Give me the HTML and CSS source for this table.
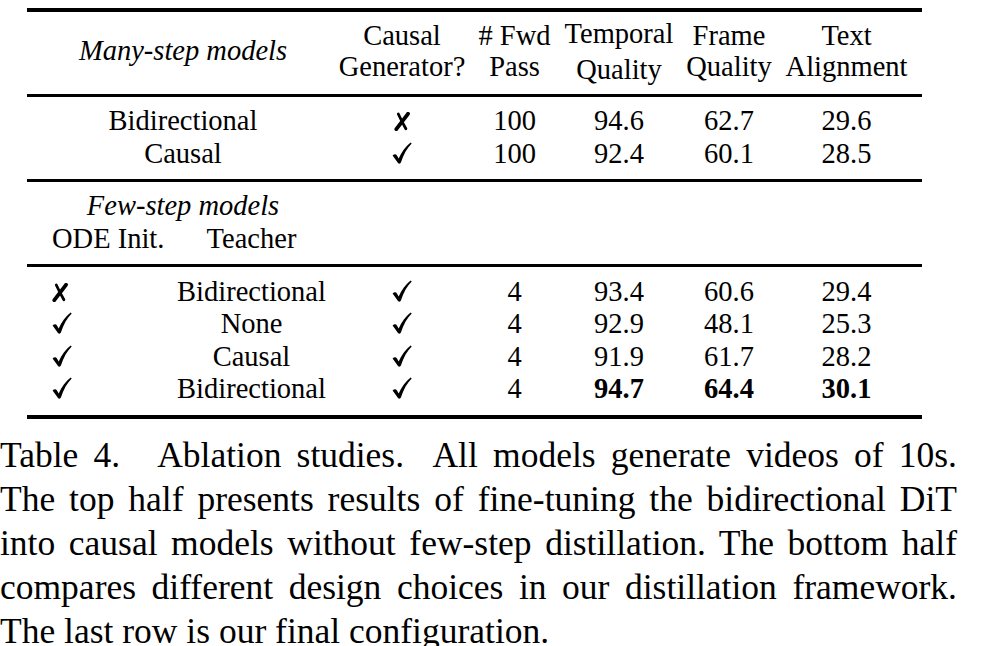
FILE: index.html
```html
<!DOCTYPE html>
<html lang="en">
<head>
<meta charset="utf-8">
<title>Table 4. Ablation studies</title>
<link rel="stylesheet" href="styles.css">
</head>
<body>
<svg class="defs" aria-hidden="true">
  <symbol id="chk" viewBox="0 0 20 22">
    <path d="M0.6 13.4 C2.1 12 3.8 11.7 4.8 13.2 L6.7 16.4 C9.6 9.8 13.6 4.3 18.6 0.4 L19.7 1.6 C15.2 6.1 11.6 12.4 8.9 20.6 C8.4 21.9 6.8 22.1 6 20.9 Z" fill="#000"/>
  </symbol>
  <symbol id="crs" viewBox="0 0 16 19">
    <path d="M14 1.8 C10.8 6 6.4 11.8 2.3 17.2" fill="none" stroke="#000" stroke-width="3.8" stroke-linecap="round"/>
    <path d="M4.3 2 C6.6 7 9.2 12 11.9 16.8" fill="none" stroke="#000" stroke-width="2.8" stroke-linecap="round"/>
  </symbol>
</svg>
<figure class="figure">
  <div class="ablation">
    <div class="sec sec-head">
      <div class="cell span2 it mid">Many-step models</div>
      <div class="cell c">Causal<br>Generator?</div>
      <div class="cell c"># Fwd<br>Pass</div>
      <div class="cell c tq">Temporal<br>Quality</div>
      <div class="cell c">Frame<br>Quality</div>
      <div class="cell c">Text<br>Alignment</div>
    </div>
    <div class="sec sec-many">
      <div class="cell span2 c msp">Bidirectional</div><div class="cell c"><svg class="mk crs" role="img" aria-label="✗"><use href="#crs"/></svg></div><div class="cell c">100</div><div class="cell c">94.6</div><div class="cell c">62.7</div><div class="cell c">29.6</div>
      <div class="cell span2 c msp">Causal</div><div class="cell c"><svg class="mk chk" role="img" aria-label="✓"><use href="#chk"/></svg></div><div class="cell c">100</div><div class="cell c">92.4</div><div class="cell c">60.1</div><div class="cell c">28.5</div>
    </div>
    <div class="sec sec-fewhead">
      <div class="cell span2 it c msp">Few-step models</div><div class="cell fill"></div>
      <div class="cell l">ODE Init.</div><div class="cell c">Teacher</div><div class="cell fill"></div>
    </div>
    <div class="sec sec-few">
      <div class="cell l"><svg class="mk crs" role="img" aria-label="✗"><use href="#crs"/></svg></div><div class="cell c">Bidirectional</div><div class="cell c"><svg class="mk chk" role="img" aria-label="✓"><use href="#chk"/></svg></div><div class="cell c">4</div><div class="cell c">93.4</div><div class="cell c">60.6</div><div class="cell c">29.4</div>
      <div class="cell l"><svg class="mk chk" role="img" aria-label="✓"><use href="#chk"/></svg></div><div class="cell c">None</div><div class="cell c"><svg class="mk chk" role="img" aria-label="✓"><use href="#chk"/></svg></div><div class="cell c">4</div><div class="cell c">92.9</div><div class="cell c">48.1</div><div class="cell c">25.3</div>
      <div class="cell l"><svg class="mk chk" role="img" aria-label="✓"><use href="#chk"/></svg></div><div class="cell c">Causal</div><div class="cell c"><svg class="mk chk" role="img" aria-label="✓"><use href="#chk"/></svg></div><div class="cell c">4</div><div class="cell c">91.9</div><div class="cell c">61.7</div><div class="cell c">28.2</div>
      <div class="cell l"><svg class="mk chk" role="img" aria-label="✓"><use href="#chk"/></svg></div><div class="cell c">Bidirectional</div><div class="cell c"><svg class="mk chk" role="img" aria-label="✓"><use href="#chk"/></svg></div><div class="cell c">4</div><div class="cell c b">94.7</div><div class="cell c b">64.4</div><div class="cell c b">30.1</div>
    </div>
  </div>
  <figcaption class="caption">
    <span class="line">Table 4.<span class="sep"></span>Ablation studies.&nbsp; All models generate videos of 10s.</span>
    <span class="line">The top half presents results of fine-tuning the bidirectional DiT</span>
    <span class="line">into causal models without few-step distillation. The bottom half</span>
    <span class="line">compares different design choices in our distillation framework.</span>
    <span class="line last">The last row is our final configuration.</span>
  </figcaption>
</figure>
</body>
</html>
```

FILE: styles.css
```css
html, body {
  margin: 0;
  padding: 0;
  background: #fff;
  color: #000;
}

.defs {
  position: absolute;
  width: 0;
  height: 0;
  overflow: hidden;
}

.figure {
  margin: 0;
  padding-top: 8px;
  font-family: "Liberation Serif", "Times New Roman", serif;
}

.ablation {
  margin-left: 27px;
  width: 895px;
  font-size: 28.5px;
}

.sec {
  display: grid;
  grid-template-columns: 143px 163px 138px 87px 122px 98px 137px;
  padding-right: 7px;
  box-sizing: border-box;
}

.sec-head {
  border-top: 4px solid #000;
  border-bottom: 3px solid #000;
  padding-top: 7.5px;
  padding-bottom: 11.5px;
  grid-template-rows: 63px;
  line-height: 31.5px;
}

.sec-head .cell {
  align-self: center;
}

.sec-head .tq {
  line-height: 36px;
  padding-top: 2px;
}

.sec-many {
  padding-top: 7px;
  padding-bottom: 9px;
  line-height: 33px;
}

.sec-fewhead {
  border-top: 3px solid #000;
  border-bottom: 3px solid #000;
  padding-top: 6.5px;
  padding-bottom: 8.5px;
  line-height: 33.5px;
}

.sec-fewhead .fill {
  grid-column: 3 / 8;
}

.sec-few {
  padding-top: 9px;
  padding-bottom: 9px;
  line-height: 32.4px;
  border-bottom: 4px solid #000;
}

.cell {
  white-space: nowrap;
}

.span2 {
  grid-column: span 2;
}

.c {
  text-align: center;
}

.l {
  text-align: left;
  padding-left: 25px;
}

.it {
  font-style: italic;
}

.mid {
  text-align: center;
  padding-left: 6px;
}

.msp {
  padding-left: 6px;
}

.b {
  font-weight: bold;
}

.mk {
  display: inline-block;
  vertical-align: -1px;
}

.mk.chk {
  width: 20px;
  height: 22px;
}

.mk.crs {
  width: 16px;
  height: 19px;
}

.caption {
  margin-top: 14.6px;
  width: 957px;
  font-size: 35.5px;
  line-height: 44px;
}

.line {
  display: block;
  text-align: justify;
  text-align-last: justify;
  white-space: nowrap;
}

.line.last {
  text-align-last: left;
}

.sep {
  display: inline-block;
  width: 37px;
}
```
